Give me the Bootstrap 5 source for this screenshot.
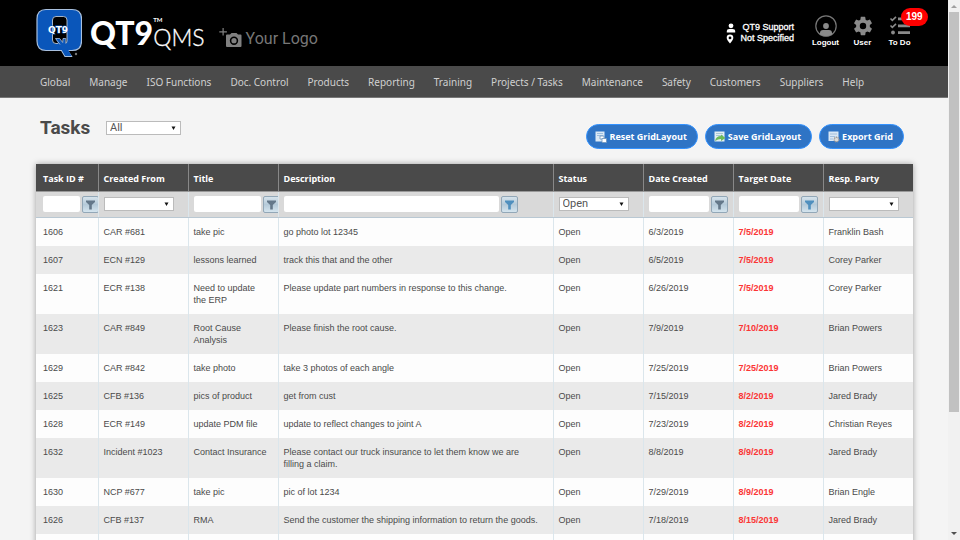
<!DOCTYPE html>
<html lang="en">
<head>
<meta charset="utf-8">
<meta name="viewport" content="width=device-width, initial-scale=1">
<title>QT9 QMS - Tasks</title>
<link href="https://cdn.jsdelivr.net/npm/bootstrap@5.3.0/dist/css/bootstrap.min.css" rel="stylesheet">
<style>
  body { background: #f4f4f4; font-family: "Liberation Sans", Arial, sans-serif; font-size: 9px; line-height: 12px; color: #4a4a4a; }
  .app-view { height: 100vh; }
  .scroll-track { width: 12px; background: #f1f1f1; padding: 4px 1px; }
  .scroll-thumb { background: #c1c1c1; width: 100%; height: 400px; margin-top: 4px; }

  .topbar { background: #000; height: 66px; padding-left: 36px; padding-right: 30px; color: #fff; }
  .wordmark { font-family: Lato, sans-serif; margin-left: 8px; }
  .word-bold { font-size: 32px; line-height: 32px; font-weight: 900; }
  .word-side { padding-top: 2px; }
  .word-tm { font-size: 6px; line-height: 6px; font-weight: 700; }
  .word-light { font-size: 23px; line-height: 28px; font-weight: 300; -webkit-text-stroke: .3px #fff; }
  .your-logo { font-family: Roboto, sans-serif; font-size: 16px; line-height: 20px; color: #777; margin: 9px 0 0 14px; gap: 3px; }
  .account { line-height: 11px; text-align: right; width: 68px; font-weight: 500; -webkit-text-stroke: .3px #fff; margin-right: 13px; }
  .tool { font-size: 8px; line-height: 10px; font-weight: 700; color: #fff; text-decoration: none; width: 37px; gap: 1px; margin-bottom: 3px; }
  .tool:hover { color: #fff; }
  .todo-count { left: 20px; top: -7px; background: #f00; font-size: 10px; line-height: 12px; padding: 3px 5px; }

  .mainnav { background: #4a4a4a; height: 32px; padding-left: 40px; gap: 19px; border-bottom: 1px solid #777; }
  .mainnav a { font-family: "Noto Sans", "Open Sans", sans-serif; font-size: 10px; line-height: 16px; color: #d0d0d0; padding: 0; white-space: nowrap; }

  .page-head { padding: 19px 44px 0 40px; margin-bottom: 15px; }
  .page-title { font-family: Roboto, sans-serif; font-size: 19px; line-height: 22px; font-weight: 700; color: #4a4a4a; width: 66px; }
  .pick { appearance: none; border: 1px solid #bbb; border-radius: 0; background: #fff url("data:image/svg+xml,%3Csvg xmlns='http://www.w3.org/2000/svg' viewBox='0 0 6 5'%3E%3Cpath d='M.5.5h5L3 5z' fill='%23111'/%3E%3C/svg%3E") no-repeat right 4px center / 5px 4px; font-family: Roboto, sans-serif; font-size: 11px; line-height: 12px; color: #555; width: 70px; height: 14px; padding: 0 3px; display: block; }
  .pick-wide { width: 75px; }
  .grid-actions { gap: 7px; padding-top: 7px; }
  .grid-btn { --bs-btn-bg: #2f74c5; --bs-btn-color: #fff; --bs-btn-border-color: #3392ff; --bs-btn-hover-bg: #2867b0; --bs-btn-hover-color: #fff; font-family: "Open Sans", sans-serif; font-size: 9px; line-height: 12px; font-weight: 700; border-width: 1px; padding: 6px 10px 5px 8px; gap: 2px; }

  .grid-wrap { margin: 0 35px 0 36px; box-shadow: 0 0 6px rgba(0,0,0,.35); }
  .task-grid { table-layout: fixed; margin: 0; width: 100%; }
  .task-grid th, .task-grid td { padding: 8px 5px; border: 0; border-left: 1px solid #dbe6ec; vertical-align: top; }
  .task-grid tr > :first-child { border-left: 0; padding-left: 7px; }
  .task-grid thead th { background: #4a4a4a; color: #fff; font-family: "Open Sans", sans-serif; font-weight: 700; border-left-color: #888; border-bottom: 1px solid #999; padding: 9px 5px 6px; white-space: nowrap; }
  .task-grid thead td { background: #d9d9d9; height: 26px; padding: 3px 0 4px 5px; overflow: hidden; border-bottom: 1px solid #b9c8d3; }
  .task-grid tbody td { background: #fdfdfd; }
  .task-grid tbody tr:nth-child(even) td { background: #eaeaea; }
  .w-id { width: 62px; } .w-col { width: 90px; }
  .filter-row { gap: 2px; height: 18px; }
  .filter-text { width: 60px; height: 16px; border: 0; border-radius: 2px; background: #fff; padding: 0 3px; flex: none; }
  .f-id { width: 37px; } .f-title { width: 67px; } .f-desc { width: 80%; }
  .filter-btn { width: 17px; height: 17px; flex: none; border: 1px solid #92a7b7; border-radius: 2px; background: linear-gradient(#d6e3ec, #b5cad9 50%, #d4e4ee); color: #64788a; padding: 0; }
  .filter-btn.lit { color: #4f8fbe; }
  .task-grid .due { color: #fb3535; font-weight: 700; }
</style>
<script src="https://cdn.jsdelivr.net/npm/bootstrap@5.3.0/dist/js/bootstrap.bundle.min.js"></script>
</head>
<body>
<svg width="0" height="0" class="position-absolute" aria-hidden="true">
  <symbol id="funnel" viewBox="0 0 15 15"><path d="M3 3.500h9v1.500L8.800 8v4.500H6.200V8L3 5z" fill="currentColor"/></symbol>
</svg>
<div class="app-view d-flex overflow-hidden">
  <div class="flex-grow-1 overflow-hidden">
    <header class="topbar d-flex align-items-center">
      <svg width="46" height="50" viewBox="0 0 46 50" role="img" aria-label="QT9">
        <path d="M10 1.500h26q9.500 0 9.500 9.500v22q0 9.500-9.500 9.500h-4.500l4 6h-6.500l-3.500-6H10Q1 42.500 1 33V11q0-9.500 9-9.500z" fill="#0a56ba" stroke="#a9c0de" stroke-width="1.200"/>
        <path d="M16.500 12q0-3.500 3.500-3.500h7.500q3.500 0 3.500 3.500v21q0 2.500-2 2.500h-9q-3.500 0-3.500-3.500z" fill="#000" stroke="#b8c4d4" stroke-width=".9"/>
        <path d="M19.500 30.500h4.200l3 4 .3-4h2.500v6l6 11.500h-6.200l-5.800-10z" fill="#0a56ba"/>
        <path d="M24 36.500l-4.500-6h4.200l3 4 .3-4h2.800v4.500" fill="none" stroke="#a9c0de" stroke-width=".8"/>
        <text x="12" y="25" font-family="DejaVu Sans" font-size="9" font-weight="700" fill="#fff" stroke="#0a56ba" stroke-width="1" paint-order="stroke">QT9</text>
        <circle cx="40" cy="46" r="1.200" fill="#777"/>
      </svg>
      <div class="wordmark d-flex align-items-center text-nowrap">
        <span class="word-bold">QT9</span>
        <span class="word-side d-flex flex-column"><span class="word-tm">TM</span><span class="word-light">QMS</span></span>
      </div>
      <div class="your-logo d-flex align-items-end text-nowrap">
        <svg width="24" height="22" viewBox="0 0 24 22" fill="#808080" aria-hidden="true">
          <path d="M3.500 1h1.200v3.200h3.200v1.200H4.700v3.200H3.500V5.400H.3V4.200h3.200z"/>
          <path fill-rule="evenodd" d="M8 7.500h3L12.500 6h5L19 7.500h2.500q1 0 1 1V19q0 1-1 1H8q-1 0-1-1V8.500q0-1 1-1zm7 2a4.200 4.200 0 1 0 0 8.400 4.200 4.200 0 0 0 0-8.400zm0 1.600a2.600 2.600 0 1 1 0 5.200 2.600 2.600 0 0 1 0-5.200z"/>
        </svg>
        <span>Your Logo</span>
      </div>
      <div class="account ms-auto">
        <div class="d-flex justify-content-between align-items-center">
          <svg width="10" height="10" viewBox="0 0 10 10" fill="#fff" aria-hidden="true"><circle cx="5" cy="2.800" r="2.400"/><path d="M.8 9.500V8q0-2 2.500-2h3.400q2.500 0 2.500 2v1.500z"/></svg>
          <span>QT9 Support</span>
        </div>
        <div class="d-flex justify-content-between align-items-center">
          <svg width="8" height="10" viewBox="0 0 8 10" aria-hidden="true"><path fill="#fff" fill-rule="evenodd" d="M4 .5a3.300 3.300 0 0 1 3.300 3.300Q7.300 6 4 9.600.700 6 .7 3.800A3.300 3.300 0 0 1 4 .5zm0 2a1.400 1.400 0 1 0 0 2.800 1.400 1.400 0 0 0 0-2.800z"/></svg>
          <span>Not Specified</span>
        </div>
      </div>
      <nav class="d-flex" aria-label="Account">
        <a class="tool d-flex flex-column align-items-center" href="#">
          <svg width="22" height="22" viewBox="0 0 22 22" aria-hidden="true"><circle cx="11" cy="11" r="10.200" fill="none" stroke="#777" stroke-width="1.200"/><circle cx="11" cy="11" r="2.900" fill="#8a8a8a"/><path d="M5 19.500v-1.500q0-3 3-3h6q3 0 3 3v1.500Q11 23 5 19.500z" fill="#8a8a8a"/></svg>
          <span>Logout</span>
        </a>
        <a class="tool d-flex flex-column align-items-center" href="#">
          <svg width="22" height="22" viewBox="0 0 24 24" fill="#8a8a8a" aria-hidden="true"><path d="M19.430 12.980c.04-.32.07-.64.07-.98s-.03-.66-.07-.98l2.110-1.650c.19-.15.24-.42.12-.64l-2-3.460c-.12-.22-.39-.3-.61-.22l-2.490 1c-.52-.4-1.080-.73-1.690-.98l-.38-2.650A.49.49 0 0 0 14 2h-4c-.25 0-.46.18-.49.42l-.38 2.650c-.61.25-1.170.59-1.690.98l-2.490-1c-.23-.09-.49 0-.61.22l-2 3.460c-.13.22-.07.49.12.64l2.110 1.650c-.04.32-.07.65-.07.98s.03.66.07.98l-2.110 1.650c-.19.15-.24.42-.12.64l2 3.460c.12.22.39.3.61.22l2.490-1c.52.4 1.080.73 1.690.98l.38 2.650c.03.24.24.42.49.42h4c.25 0 .46-.18.49-.42l.38-2.650c.61-.25 1.170-.59 1.690-.98l2.490 1c.23.09.49 0 .61-.22l2-3.460c.12-.22.07-.49-.12-.64zM12 15.500a3.500 3.500 0 1 1 0-7 3.500 3.500 0 0 1 0 7z"/></svg>
          <span>User</span>
        </a>
        <a class="tool position-relative d-flex flex-column align-items-center" href="#">
          <svg width="22" height="22" viewBox="0 0 22 22" aria-hidden="true"><g fill="none" stroke="#8a8a8a" stroke-width="1.600"><path d="M1.500 3.500l1.800 1.800L7 1.800M1.500 10.500l1.800 1.800L7 8.800"/></g><g fill="#8a8a8a"><path d="M9 2.500h12v2.800H9zM9 9.500h12v2.800H9zM9 16.200h12V19H9z"/><circle cx="4" cy="17.500" r="1.900"/></g></svg>
          <span>To Do</span>
          <span class="todo-count position-absolute rounded-pill">199</span>
        </a>
      </nav>
    </header>

    <nav class="mainnav nav flex-nowrap align-items-center" aria-label="Main">
      <a class="nav-link" href="#">Global</a>
      <a class="nav-link" href="#">Manage</a>
      <a class="nav-link" href="#">ISO Functions</a>
      <a class="nav-link" href="#">Doc. Control</a>
      <a class="nav-link" href="#">Products</a>
      <a class="nav-link" href="#">Reporting</a>
      <a class="nav-link" href="#">Training</a>
      <a class="nav-link" href="#">Projects / Tasks</a>
      <a class="nav-link" href="#">Maintenance</a>
      <a class="nav-link" href="#">Safety</a>
      <a class="nav-link" href="#">Customers</a>
      <a class="nav-link" href="#">Suppliers</a>
      <a class="nav-link" href="#">Help</a>
    </nav>

    <main>
      <div class="page-head d-flex align-items-start">
        <h1 class="page-title mb-0"><label for="scope">Tasks</label></h1>
        <select id="scope" class="pick pick-wide mt-1"><option>All</option></select>
        <div class="grid-actions d-flex ms-auto">
          <button type="button" class="btn grid-btn rounded-pill d-flex align-items-center">
            <svg width="12" height="12" viewBox="0 0 12 12" aria-hidden="true"><path d="M.5.5h9v10h-9z" fill="#dbe9f5"/><path d="M2 2.500h6M2 4.500h6" stroke="#9dbfdf"/><path d="M5 5h4v3H5z" fill="#fff" stroke="#6d94bd" stroke-width=".8"/><path d="M7 7.500h4.500v4H7z" fill="#fff" stroke="#6d94bd" stroke-width=".8"/></svg>
            Reset GridLayout</button>
          <button type="button" class="btn grid-btn rounded-pill d-flex align-items-center">
            <svg width="12" height="12" viewBox="0 0 12 12" aria-hidden="true"><path d="M.5.5h10v10H.5z" fill="#e3eef2"/><path d="M2 2.500h7M2 4.500h7" stroke="#a9c7d6"/><path d="M1 10q1-5 6-5V3.500L11.500 7 7 10V8Q4 8 1 10z" fill="#6dbb58"/></svg>
            Save GridLayout</button>
          <button type="button" class="btn grid-btn rounded-pill d-flex align-items-center">
            <svg width="12" height="12" viewBox="0 0 12 12" aria-hidden="true"><path d="M.5.500h10v9.500H.5z" fill="#d9e7f4"/><path d="M2 3h7M2 5.500h5M2 8h3" stroke="#a3bfdd"/><circle cx="8.500" cy="8.500" r="2.300" fill="#ddd" stroke="#999" stroke-width="1.400" stroke-dasharray="1.200 .6"/></svg>
            Export Grid</button>
        </div>
      </div>

      <div class="grid-wrap">
        <table class="task-grid">
          <colgroup><col class="w-id"><col class="w-col"><col class="w-col"><col><col class="w-col"><col class="w-col"><col class="w-col"><col class="w-col"></colgroup>
          <thead>
            <tr><th>Task ID #</th><th>Created From</th><th>Title</th><th>Description</th><th>Status</th><th>Date Created</th><th>Target Date</th><th>Resp. Party</th></tr>
            <tr>
              <td><div class="filter-row d-flex align-items-center"><input class="filter-text f-id" aria-label="Filter Task ID"><button type="button" class="filter-btn d-flex" aria-label="Filter"><svg width="15" height="15"><use href="#funnel"/></svg></button></div></td>
              <td><div class="filter-row d-flex align-items-center"><select class="pick" aria-label="Filter Created From"><option></option></select></div></td>
              <td><div class="filter-row d-flex align-items-center"><input class="filter-text f-title" aria-label="Filter Title"><button type="button" class="filter-btn d-flex" aria-label="Filter"><svg width="15" height="15"><use href="#funnel"/></svg></button></div></td>
              <td><div class="filter-row d-flex align-items-center"><input class="filter-text f-desc" aria-label="Filter Description"><button type="button" class="filter-btn lit d-flex" aria-label="Filter"><svg width="15" height="15"><use href="#funnel"/></svg></button></div></td>
              <td><div class="filter-row d-flex align-items-center"><select class="pick" aria-label="Filter Status"><option>Open</option></select></div></td>
              <td><div class="filter-row d-flex align-items-center"><input class="filter-text" aria-label="Filter Date Created"><button type="button" class="filter-btn d-flex" aria-label="Filter"><svg width="15" height="15"><use href="#funnel"/></svg></button></div></td>
              <td><div class="filter-row d-flex align-items-center"><input class="filter-text" aria-label="Filter Target Date"><button type="button" class="filter-btn lit d-flex" aria-label="Filter"><svg width="15" height="15"><use href="#funnel"/></svg></button></div></td>
              <td><div class="filter-row d-flex align-items-center"><select class="pick" aria-label="Filter Resp. Party"><option></option></select></div></td>
            </tr>
          </thead>
          <tbody>
            <tr><td>1606</td><td>CAR #681</td><td>take pic</td><td>go photo lot 12345</td><td>Open</td><td>6/3/2019</td><td class="due">7/5/2019</td><td>Franklin Bash</td></tr>
            <tr><td>1607</td><td>ECN #129</td><td>lessons learned</td><td>track this that and the other</td><td>Open</td><td>6/5/2019</td><td class="due">7/5/2019</td><td>Corey Parker</td></tr>
            <tr><td>1621</td><td>ECR #138</td><td>Need to update<br>the ERP</td><td>Please update part numbers in response to this change.</td><td>Open</td><td>6/26/2019</td><td class="due">7/5/2019</td><td>Corey Parker</td></tr>
            <tr><td>1623</td><td>CAR #849</td><td>Root Cause<br>Analysis</td><td>Please finish the root cause.</td><td>Open</td><td>7/9/2019</td><td class="due">7/10/2019</td><td>Brian Powers</td></tr>
            <tr><td>1629</td><td>CAR #842</td><td>take photo</td><td>take 3 photos of each angle</td><td>Open</td><td>7/25/2019</td><td class="due">7/25/2019</td><td>Brian Powers</td></tr>
            <tr><td>1625</td><td>CFB #136</td><td>pics of product</td><td>get from cust</td><td>Open</td><td>7/15/2019</td><td class="due">8/2/2019</td><td>Jared Brady</td></tr>
            <tr><td>1628</td><td>ECR #149</td><td>update PDM file</td><td>update to reflect changes to joint A</td><td>Open</td><td>7/23/2019</td><td class="due">8/2/2019</td><td>Christian Reyes</td></tr>
            <tr><td>1632</td><td>Incident #1023</td><td>Contact Insurance</td><td>Please contact our truck insurance to let them know we are<br>filling a claim.</td><td>Open</td><td>8/8/2019</td><td class="due">8/9/2019</td><td>Jared Brady</td></tr>
            <tr><td>1630</td><td>NCP #677</td><td>take pic</td><td>pic of lot 1234</td><td>Open</td><td>7/29/2019</td><td class="due">8/9/2019</td><td>Brian Engle</td></tr>
            <tr><td>1626</td><td>CFB #137</td><td>RMA</td><td>Send the customer the shipping information to return the goods.</td><td>Open</td><td>7/18/2019</td><td class="due">8/15/2019</td><td>Jared Brady</td></tr>
            <tr><td>&nbsp;</td><td></td><td></td><td></td><td></td><td></td><td></td><td></td></tr>
          </tbody>
        </table>
      </div>
    </main>
  </div>
  <div class="scroll-track flex-shrink-0 d-flex flex-column align-items-center" aria-hidden="true">
    <svg width="6" height="4" viewBox="0 0 6 4"><path d="M0 4L3 1l3 3z" fill="#a0a0a0"/></svg>
    <div class="scroll-thumb"></div>
    <svg class="mt-auto" width="6" height="4" viewBox="0 0 6 4"><path d="M0 0h6L3 3z" fill="#505050"/></svg>
  </div>
</div>
</body>
</html>
